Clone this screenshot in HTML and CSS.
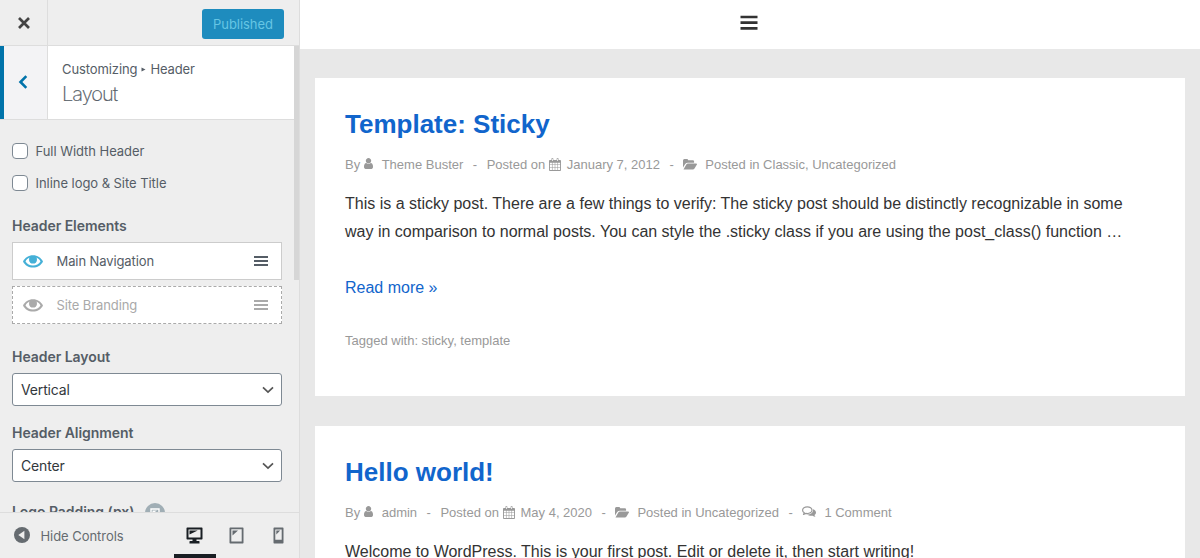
FILE: index.html
```html
<!DOCTYPE html>
<html lang="en">
<head>
<meta charset="utf-8">
<title>Customize: Layout</title>
<link rel="stylesheet" href="styles.css">
</head>
<body>
<svg class="sprite" aria-hidden="true">
  <symbol id="user" viewBox="0 0 1280 1536"><path d="M1280 1271q0 109-62.500 187T1067 1536H213q-88 0-150.500-78T0 1271q0-85 8.500-160.500t31.500-152 58.500-131 94-89T327 704q131 128 313 128t313-128q76 0 134.500 34.500t94 89 58.500 131 31.500 152T1280 1271zM1024 384q0 159-112.500 271.500T640 768 368.500 655.500 256 384 368.500 112.500 640 0t271.500 112.500T1024 384z"/></symbol>
  <symbol id="calendar" viewBox="0 0 13 14"><path fill-rule="evenodd" d="M1 2h1.700V.8Q2.700 0 3.500 0h.4q.8 0 .8.800V2h3.600V.8q0-.8.800-.8h.4q.8 0 .8.800V2H12q1 0 1 1v10q0 1-1 1H1q-1 0-1-1V3q0-1 1-1zM3.300.8v2.500h.8V.800zM8.900.8v2.500h.8V.800zM1 5v2h2.200V5zM3.800 5v2h2.400V5zM6.800 5v2h2.400V5zM9.800 5v2H12V5zM1 7.600v2.400h2.200V7.600zM3.800 7.600v2.400h2.400V7.600zM6.800 7.600v2.400h2.400V7.600zM9.800 7.600v2.400H12V7.600zM1 10.600V13h2.200v-2.400zM3.800 10.600V13h2.400v-2.400zM6.800 10.600V13h2.400v-2.400zM9.800 10.600V13H12v-2.400z"/></symbol>
  <symbol id="folder" viewBox="0 0 14 11"><path d="M0 8.600V1.500Q0 0 1.400 0h2.400q1.400 0 1.400 1.300h4.600q1.300 0 1.300 1.300v1.100H4.800q-1.600 0-2.600 1.200zM.5 10.400l2.800-4.900q.6-.9 1.700-.9h8.300q1 0 .6.800l-2.400 4.200q-.6 1-1.700 1H1q-.7 0-.5-.2z"/></symbol>
  <symbol id="comments" viewBox="0 0 14 12"><path fill="none" stroke="currentColor" stroke-width="1.200" stroke-linejoin="round" d="M5.300.8C2.700.8.600 2.300.6 4.200c0 1.100.7 2 1.700 2.600L1.500 8.500l2.400-1.100c3.400.6 6.100-1.100 6.100-3.200C10 2.300 7.900.8 5.300.8z"/><path d="M11 3.200c1.800.7 3 1.800 3 3.200 0 1-.6 1.900-1.500 2.500.1.800.5 1.300 1.100 1.800-1.200 0-2.200-.3-3-1-2.100.3-4.200-.2-5.600-1.200 3.600 0 6.500-2 6-5.300z"/></symbol>
  <symbol id="eye" viewBox="0 0 20 13"><path fill-rule="evenodd" d="M10 .2c4.500 0 8 2.400 10 6.200-2 3.900-5.500 6.100-10 6.100S2 10.300 0 6.400C2 2.600 5.500.2 10 .2zM6.600 2.600C4.900 3.400 3.500 4.700 2.500 6.400c1.700 2.600 4.200 4 7.500 4s5.800-1.400 7.500-4c-1-1.700-2.400-3-4.100-3.800.3.500.4 1.100.4 1.700a3.800 3.800 0 0 1-7.600 0c0-.6.100-1.200.4-1.700z"/><circle cx="10" cy="4.900" r="3.700"/></symbol>
  <symbol id="chevron" viewBox="0 0 12 8"><path fill="none" stroke="currentColor" stroke-width="1.700" d="M1 1.300l5 4.800 5-4.800"/></symbol>
</svg>
<div class="app">
  <aside class="sidebar">
    <div class="topbar">
      <button class="close" aria-label="Close"><svg width="12" height="12" viewBox="0 0 12 12"><path d="M1 1l10 10m0-10L1 11" stroke="currentColor" stroke-width="2.700"/></svg></button>
      <button class="publish">Published</button>
    </div>
    <div class="section-head">
      <button class="back" aria-label="Back"><svg width="10" height="14" viewBox="0 0 10 14"><path d="M8.300 1.200L2.500 7l5.800 5.800" fill="none" stroke="currentColor" stroke-width="2.600"/></svg></button>
      <div class="heading">
        <div class="crumb">Customizing <svg width="5" height="5" viewBox="0 0 5 5"><path d="M.5.500l4 2-4 2z"/></svg> Header</div>
        <h1 class="section-title">Layout</h1>
      </div>
    </div>
    <div class="scroll-thumb"></div>
    <div class="controls">
      <label class="check"><span class="box"></span><span>Full Width Header</span></label>
      <label class="check"><span class="box"></span><span>Inline logo &amp; Site Title</span></label>
      <h2 class="label elements-label">Header Elements</h2>
      <div class="element"><svg class="eye"><use href="#eye"/></svg><span>Main Navigation</span><i class="grip"></i></div>
      <div class="element off"><svg class="eye"><use href="#eye"/></svg><span>Site Branding</span><i class="grip"></i></div>
      <h2 class="label layout-label">Header Layout</h2>
      <div class="select"><span>Vertical</span><svg class="chevron"><use href="#chevron"/></svg></div>
      <h2 class="label align-label">Header Alignment</h2>
      <div class="select"><span>Center</span><svg class="chevron"><use href="#chevron"/></svg></div>
      <div class="padding-row"><h2 class="label">Logo Padding (px)</h2><span class="device-badge"><svg width="10" height="10" viewBox="0 0 10 10"><path d="M1 1h8v6H1z" fill="none" stroke="#fff" stroke-width="1.400"/><path d="M2.500 2.500h4.500l-4.500 3z" fill="#fff"/><path d="M3 9.300h4M5 7v2" stroke="#fff" stroke-width="1.400"/></svg></span></div>
    </div>
    <div class="footer">
      <button class="collapse"><svg width="16" height="16" viewBox="0 0 16 16"><circle cx="8" cy="8" r="8" fill="currentColor"/><path d="M10.400 3.700v8.600L4.300 8z" fill="#eee"/></svg><span>Hide Controls</span></button>
      <div class="devices">
        <button class="device active" aria-label="Desktop"><svg width="17" height="17" viewBox="0 0 17 17"><path fill="currentColor" fill-rule="evenodd" d="M1.200.500h14.600q.7 0 .7.700v10.600q0 .7-.7.700H10.500V14h2.500q.5 0 .5.500v2h-10v-2q0-.5.500-.5h2.500v-1.500H1.200q-.7 0-.7-.7V1.200q0-.7.700-.7zM2.500 2.500v8h12v-8z"/><path fill="currentColor" d="M3.500 3.500h8.200l-8.200 4z"/></svg></button>
        <button class="device" aria-label="Tablet"><svg width="15" height="17" viewBox="0 0 15 17"><path fill="currentColor" fill-rule="evenodd" d="M1.200.5h12.600q.7 0 .7.700v14.600q0 .7-.7.700H1.200q-.7 0-.7-.7V1.200q0-.7.700-.7zM2.300 2.300v12.200h10.400V2.300z"/><path fill="currentColor" d="M3.500 3.500H9l-5.500 5z"/></svg></button>
        <button class="device" aria-label="Mobile"><svg width="11" height="17" viewBox="0 0 11 17"><path fill="currentColor" fill-rule="evenodd" d="M1.200.5h8.600q.7 0 .7.700v14.600q0 .7-.7.700H1.200q-.7 0-.7-.7V1.200q0-.7.700-.7zM2.300 2.500v10.300h6.400V2.500z"/><path fill="currentColor" d="M3.300 3.500h3.900l-3.900 4z"/></svg></button>
      </div>
    </div>
  </aside>
  <main class="preview">
    <header class="site-header"><svg width="18" height="16" viewBox="0 0 18 16"><path stroke="#333" stroke-width="2.700" d="M.5 2h17M.5 7.700h17M.5 13.400h17"/></svg></header>
    <article class="post">
      <h2 class="post-title">Template: Sticky</h2>
      <div class="meta"><span>By</span><svg class="user"><use href="#user"/></svg><span>Theme Buster</span><span class="dash">-</span><span>Posted on</span><svg class="calendar"><use href="#calendar"/></svg><span>January 7, 2012</span><span class="dash">-</span><svg class="folder"><use href="#folder"/></svg><span>Posted in Classic, Uncategorized</span></div>
      <p class="excerpt">This is a sticky post. There are a few things to verify: The sticky post should be distinctly recognizable in some<br>way in comparison to normal posts. You can style the .sticky class if you are using the post_class() function …</p>
      <a class="more">Read more »</a>
      <div class="tags">Tagged with: sticky, template</div>
    </article>
    <article class="post">
      <h2 class="post-title">Hello world!</h2>
      <div class="meta"><span>By</span><svg class="user"><use href="#user"/></svg><span>admin</span><span class="dash">-</span><span>Posted on</span><svg class="calendar"><use href="#calendar"/></svg><span>May 4, 2020</span><span class="dash">-</span><svg class="folder"><use href="#folder"/></svg><span>Posted in Uncategorized</span><span class="dash">-</span><svg class="comments"><use href="#comments"/></svg><span>1 Comment</span></div>
      <p class="excerpt">Welcome to WordPress. This is your first post. Edit or delete it, then start writing!</p>
    </article>
  </main>
</div>
</body>
</html>
```
FILE: styles.css
```css
* { box-sizing: border-box; }
body { margin: 0; background: #e8e8e8; overflow: hidden; }
h1, h2, p { margin: 0; }
svg { display: block; flex: none; }
button { border: 0; padding: 0; margin: 0; background: none; color: inherit; font: inherit; letter-spacing: inherit; }
.sprite { position: absolute; width: 0; height: 0; }
.app { display: flex; height: 558px; overflow: hidden; }

.sidebar { position: relative; display: flex; flex-direction: column; flex: none; width: 300px; height: 558px; background: #eee; border-right: 1px solid #ddd; color: #555d66; font: 13px/20px Inter, sans-serif; letter-spacing: -.05px; }
.topbar { display: flex; justify-content: space-between; flex: none; height: 46px; border-bottom: 1px solid #ddd; }
.close { display: flex; align-items: center; justify-content: center; width: 48px; height: 45px; border-right: 1px solid #ddd; color: #444; }
.publish { width: 82px; height: 30px; margin: 9px 15px 0 0; border-radius: 3px; background: #1e8cbe; color: #66c6e4; }
.section-head { display: flex; flex: none; width: 294px; height: 74px; border-bottom: 1px solid #ddd; background: #fff; }
.back { display: flex; align-items: center; justify-content: center; width: 48px; padding: 0 5px 2px 0; border-right: 1px solid #ddd; border-left: 4px solid #0073aa; background: #f3f3f5; color: #0073aa; }
.heading { padding: 13px 0 0 14px; }
.crumb { display: flex; align-items: center; gap: 4px; letter-spacing: -.1px; }
.crumb svg { fill: #555d66; }
.section-title { margin-top: 2px; font-size: 20px; line-height: 26px; font-weight: 200; letter-spacing: -1px; -webkit-text-stroke: .2px #555d66; }
.scroll-thumb { position: absolute; top: 46px; right: 0; width: 5px; height: 234px; background: #d6d6d6; }
.controls { flex: 1; min-height: 0; overflow: hidden; padding: 21px 17px 0 12px; }
.check { display: flex; align-items: center; gap: 7.500px; height: 20px; margin-bottom: 12px; }
.box { width: 16px; height: 16px; border: 1px solid #7e8993; border-radius: 4px; background: #fff; }
.label { font-size: 14px; line-height: 24px; font-weight: 600; }
.elements-label { margin: 21px 0 4px; }
.element { display: flex; align-items: center; width: 270px; height: 38px; padding: 0 13px 0 10px; margin-bottom: 6px; border: 1px solid #ccc; background: #fff; letter-spacing: -.1px; }
.element .eye { width: 20px; height: 13px; margin-right: 13.500px; fill: #45b0d7; }
.grip { width: 14px; height: 10px; margin-left: auto; border: solid #555d66; border-width: 2px 0; background: linear-gradient(#555d66, #555d66) center / 14px 2px no-repeat; }
.element.off { border: 1px dashed #aaa; color: #a9a9a9; }
.off .eye { fill: #aaa; }
.off .grip { border-color: #aaa; background-image: linear-gradient(#aaa, #aaa); }
.layout-label { margin: 21px 0 4px; }
.select { display: flex; align-items: center; justify-content: space-between; width: 270px; height: 33px; padding: 0 7px 0 8px; border: 1px solid #7e8993; border-radius: 3px; background: #fff; color: #32373c; font-size: 14px; letter-spacing: -.15px; }
.chevron { width: 12px; height: 8px; color: #555; }
.align-label { margin: 15px 0 4px; }
.padding-row { display: flex; gap: 11px; margin-top: 18px; }
.device-badge { display: flex; align-items: center; justify-content: center; width: 20px; height: 20px; margin-top: 3px; border-radius: 50%; background: #a0aeb5; }
.footer { display: flex; flex: none; height: 46px; border-top: 1px solid #ddd; }
.collapse { display: flex; flex: none; align-items: center; gap: 10.500px; width: 174px; padding: 1px 0 0 14px; color: #656b70; }
.collapse svg { margin-top: -2px; }
.devices { display: flex; }
.device { display: flex; align-items: center; justify-content: center; width: 42px; height: 45px; border-bottom: 4px solid transparent; padding: 4px 1px 0 0; color: #656b70; }
.device.active { border-color: #191e23; color: #191e23; }

.preview { flex: 1; background: #e8e8e8; color: #333; font: 16px/28px "Liberation Sans", Arial, sans-serif; }
.site-header { display: flex; justify-content: center; height: 49px; padding: 15px 2px 0 0; background: #fff; }
.post { height: 318px; margin: 29px 15px 30px; padding: 30px; background: #fff; }
.post-title { height: 33px; font-size: 26px; line-height: 33px; color: #1165cc; }
.meta { display: flex; align-items: center; height: 20px; margin-top: 14px; color: #999; font-size: 13px; line-height: 20px; white-space: nowrap; }
.meta svg { fill: currentColor; color: #999; margin-top: -2px; }
.dash { margin: 0 9.500px; }
.meta .user { width: 9px; height: 11px; margin: -3px 8.500px 0 4px; }
.meta .calendar { width: 12px; height: 13px; margin: -2px 5.500px 0 4px; }
.folder { width: 14px; height: 11px; margin-right: 8px; }
.comments { width: 14px; height: 12px; margin-right: 8px; }
.excerpt { margin-top: 15px; white-space: nowrap; }
.more { display: block; margin-top: 28px; color: #1165cc; }
.tags { margin-top: 29px; color: #999; font-size: 13px; line-height: 20px; }
.preview .post + .post { margin-top: 30px; }
```
